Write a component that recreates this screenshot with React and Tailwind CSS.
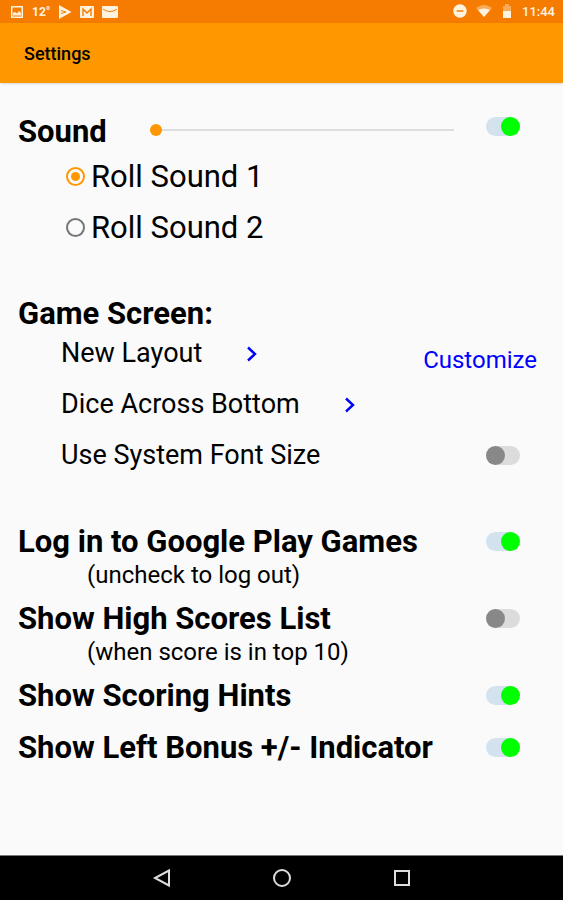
import React, { useState } from 'react'
import { MdDoNotDisturbOn } from 'react-icons/md'

const StatusBar = () => {
    return (
        <div className="flex h-[23px] items-center justify-between bg-[#f57c00] px-2 text-xs font-bold text-[#fff3e0]">
            <div className="flex items-center gap-2">
                <svg width="16" height="16" viewBox="0 0 16 16" fill="currentColor">
                    <path fillRule="evenodd" d="M3 2h12v12H3zM4.500 3.500v9h9v-9z" />
                    <path d="M5 11.500V9l2-1 2 1.500L11 7l2 2v2.500z" />
                </svg>
                <span>12°</span>
                <svg width="14" height="16" viewBox="0 0 14 16" fill="none">
                    <path d="M1 1v14L13.500 8z" fill="currentColor" />
                    <path d="M3 6.500l5 1.500-5 1.500" stroke="#f57c00" />
                </svg>
                <svg width="14" height="12" viewBox="0 0 14 12">
                    <rect width="14" height="12" rx="1" fill="currentColor" />
                    <path d="M3 10V3l4 4 4-4v7" fill="none" stroke="#f57c00" strokeWidth="1.400" />
                </svg>
                <svg width="16" height="12" viewBox="0 0 16 12">
                    <rect width="16" height="12" rx="1" fill="currentColor" />
                    <path d="M1 3c3 2 5 2.500 7 2.500s4-.5 7-2.500" fill="none" stroke="#f57c00" />
                </svg>
            </div>
            <div className="flex items-center gap-2">
                <MdDoNotDisturbOn size={16} />
                <svg width="16" height="12" viewBox="0 0 16 12" fill="currentColor">
                    <path d="M0 3Q8-3 16 3L8 12z" opacity="0.4" />
                    <path d="M2 5Q8 2 14 5L8 12z" />
                </svg>
                <svg width="14" height="14" viewBox="0 0 14 14" fill="currentColor">
                    <path d="M3 2h2V0h4v2h2v5H3z" opacity="0.4" />
                    <path d="M3 7h8v7H3z" />
                </svg>
                <span className="text-[13px] font-medium">11:44</span>
            </div>
        </div>
    )
}

const Toggle = ({ id, label, defaultChecked }) => {
    return (
        <input
            id={id}
            type="checkbox"
            aria-label={label}
            defaultChecked={defaultChecked}
            className="flex h-[19px] w-[34px] shrink-0 appearance-none rounded-full bg-[#dcdcdc] before:h-[19px] before:w-[19px] before:rounded-full before:bg-[#888] checked:justify-end checked:bg-[#d2e2ef] checked:before:bg-[#00ff00]"
        />
    )
}

const RollSound = ({ label, value, selected, onChange }) => {
    return (
        <label className="flex h-[51px] items-center gap-[6px] pl-12 text-[31px]">
            <input
                type="radio"
                name="rollSound"
                checked={selected}
                onChange={() => onChange(value)}
                className="flex h-[19px] w-[19px] appearance-none items-center justify-center rounded-full border-2 border-[#757575] checked:border-[#ff9800] checked:before:h-[9px] checked:before:w-[9px] checked:before:rounded-full checked:before:bg-[#ff9800]"
            />
            {label}
        </label>
    )
}

const Chevron = ({ label }) => {
    return (
        <button aria-label={label} className="text-[#0000ff]">
            <svg width="12" height="18" viewBox="0 0 12 18" fill="none" stroke="currentColor" strokeWidth="2.400">
                <path d="M2 2.500L9 9l-7 6.500" />
            </svg>
        </button>
    )
}

const Option = ({ id, title, note, on }) => {
    return (
        <div>
            <div className="flex h-9 items-center justify-between pr-[25px]">
                <label htmlFor={id} className="text-[31px] font-bold">{title}</label>
                <Toggle id={id} defaultChecked={on} />
            </div>
            {note && <p className="flex h-8 items-center pl-[69px] text-2xl">{note}</p>}
        </div>
    )
}

const NavBar = () => {
    return (
        <nav className="flex h-[45px] items-center justify-center gap-[100px] border-t border-[#777] bg-black text-[#ddd]">
            <button aria-label="Back">
                <svg width="20" height="20" viewBox="0 0 20 20" fill="none" stroke="currentColor" strokeWidth="2">
                    <path d="M17 2.500v15L3 10z" />
                </svg>
            </button>
            <button aria-label="Home">
                <svg width="20" height="20" viewBox="0 0 20 20" fill="none" stroke="currentColor" strokeWidth="2">
                    <circle cx="10" cy="10" r="8" />
                </svg>
            </button>
            <button aria-label="Overview">
                <svg width="20" height="20" viewBox="0 0 20 20" fill="none" stroke="currentColor" strokeWidth="2">
                    <rect x="3" y="3" width="14" height="14" />
                </svg>
            </button>
        </nav>
    )
}

export default function App() {
    const [rollSound, setRollSound] = useState('1')

    return (
        <div className="flex min-h-screen flex-col bg-[#fafafa] font-['Roboto',sans-serif] leading-none text-black">
            <StatusBar />
            <header className="flex h-[60px] items-center bg-[#ff9800] pt-[2px] pl-6 shadow">
                <h1 className="text-lg font-medium">Settings</h1>
            </header>

            <main className="flex-1 px-[18px] pt-[26px]">
                <section>
                    <div className="flex h-[42px] items-center pr-[25px]">
                        <label htmlFor="volume" className="w-[132px] pt-[2px] text-[31px] font-bold">Sound</label>
                        <input
                            id="volume"
                            type="range"
                            defaultValue="0"
                            className="mr-8 h-3 min-w-0 flex-1 appearance-none bg-transparent [&::-webkit-slider-runnable-track]:h-[2px] [&::-webkit-slider-runnable-track]:bg-[#dedede] [&::-webkit-slider-thumb]:-mt-[5px] [&::-webkit-slider-thumb]:h-3 [&::-webkit-slider-thumb]:w-3 [&::-webkit-slider-thumb]:appearance-none [&::-webkit-slider-thumb]:rounded-full [&::-webkit-slider-thumb]:bg-[#ff9800]"
                        />
                        <div className="pb-2">
                            <Toggle id="sound" label="Sound on" defaultChecked />
                        </div>
                    </div>
                    <RollSound label="Roll Sound 1" value="1" selected={rollSound === '1'} onChange={setRollSound} />
                    <RollSound label="Roll Sound 2" value="2" selected={rollSound === '2'} onChange={setRollSound} />
                </section>

                <section className="pt-[45px]">
                    <h2 className="flex h-[30px] items-center text-[31px] font-bold">Game Screen:</h2>
                    <div className="pl-[43px] text-[27px]">
                        <div className="flex h-[51px] items-center gap-11 pr-2">
                            <span>New Layout</span>
                            <Chevron label="Next layout" />
                            <a href="#customize" className="ml-auto pt-3 text-2xl text-[#0000ff]">Customize</a>
                        </div>
                        <div className="flex h-[51px] items-center gap-11">
                            <span>Dice Across Bottom</span>
                            <Chevron label="Next dice position" />
                        </div>
                        <div className="flex h-[51px] items-center justify-between pr-[25px]">
                            <label htmlFor="fontSize">Use System Font Size</label>
                            <Toggle id="fontSize" />
                        </div>
                    </div>
                </section>

                <section className="pt-[42px] pb-6">
                    <div className="flex flex-col gap-[9px]">
                        <Option id="playGames" title="Log in to Google Play Games" note="(uncheck to log out)" on />
                        <Option id="highScores" title="Show High Scores List" note="(when score is in top 10)" />
                    </div>
                    <div className="flex flex-col gap-4 pt-[9px]">
                        <Option id="hints" title="Show Scoring Hints" on />
                        <Option id="bonus" title="Show Left Bonus +/- Indicator" on />
                    </div>
                </section>
            </main>

            <NavBar />
        </div>
    )
}
